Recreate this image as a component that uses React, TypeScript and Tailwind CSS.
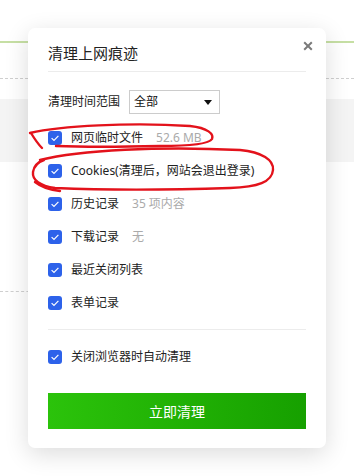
import React from 'react';

const font = { fontFamily: '"Noto Sans", "Noto Sans CJK SC", sans-serif' };

const Check: React.FC = () => (
    <span className="flex h-[14px] w-[14px] shrink-0 items-center justify-center rounded-[3px] bg-[#2d62ea]">
        <svg width="14" height="14" viewBox="0 0 14 14">
            <path d="M3.6 7.1 L6 9.4 L10.4 4.9" fill="none" stroke="#fff" strokeWidth="1.2" />
        </svg>
    </span>
);

interface RowProps {
    label: string;
    extra?: string;
}

const Row: React.FC<RowProps> = ({ label, extra }) => (
    <div className="flex h-[33px] items-center">
        <Check />
        <span className="ml-[9px] text-[12px] text-[#222]">{label}</span>
        {extra && <span className="ml-[13px] text-[12px] text-[#aaa]">{extra}</span>}
    </div>
);

const items: RowProps[] = [
    { label: '网页临时文件', extra: '52.6 MB' },
    { label: 'Cookies(清理后，网站会退出登录)' },
    { label: '历史记录', extra: '35 项内容' },
    { label: '下载记录', extra: '无' },
    { label: '最近关闭列表' },
    { label: '表单记录' },
];

export default function App() {
    return (
        <div className="relative h-[476px] w-[354px] overflow-hidden bg-white" style={font}>
            {/* page behind the dialog */}
            <div className="pt-[41px]">
                <div className="h-[2px] bg-[#c6dfa4]" />
                <div className="mt-[35px] border-t border-dashed border-[#cfcfcf]" />
                <div className="mt-[20px] h-[63px] bg-[#f4f4f4]" />
                <div className="ml-0 mt-[129px] w-[40px] border-t border-dashed border-[#cfcfcf]" />
            </div>

            {/* dialog */}
            <div className="absolute left-[28px] top-[28px] flex w-[298px] flex-col rounded-[7px] bg-white px-5 pb-[19px] shadow-[0_6px_24px_rgba(0,0,0,0.14)]">
                <div className="relative pt-[15px]">
                    <div className="text-[15px] leading-[20px] text-[#222]">清理上网痕迹</div>
                    <svg className="absolute right-[-7px] top-[13px]" width="10" height="10" viewBox="0 0 10 10">
                        <path d="M1.2 1.2 L8.8 8.8 M8.8 1.2 L1.2 8.8" stroke="#7a7a7a" strokeWidth="2" />
                    </svg>
                </div>
                <div className="mt-[8px] border-b border-[#ececec]" />

                <div className="mt-[18px] flex items-center">
                    <span className="text-[12px] text-[#222]">清理时间范围</span>
                    <div className="ml-[9px] flex h-[24px] w-[91px] items-center justify-between border border-[#cccccc] pl-[4px] pr-[7px]">
                        <span className="text-[12px] text-[#111]">全部</span>
                        <svg width="8" height="5" viewBox="0 0 8 5">
                            <path d="M0 0 H8 L4 5 Z" fill="#111" />
                        </svg>
                    </div>
                </div>

                <div className="mt-[7px] flex flex-col">
                    {items.map(it => <Row key={it.label} {...it} />)}
                </div>

                <div className="mt-[10px] border-b border-[#ececec]" />
                <div className="mt-[10px]">
                    <Row label="关闭浏览器时自动清理" />
                </div>

                <button className="mt-[20px] flex h-[36px] w-full items-center justify-center bg-gradient-to-r from-[#2bc30b] to-[#16a000] text-[14px] text-white">
                    立即清理
                </button>
            </div>

            {/* red hand-drawn marks */}
            <svg className="pointer-events-none absolute left-0 top-0" width="354" height="476" viewBox="0 0 354 476">
                <g fill="none" stroke="#e3121b" strokeWidth="2.4" strokeLinecap="round" strokeLinejoin="round">
                    <path d="M30 133 C60 126 130 122 190 126 C208 128 214 134 212 139 C209 144 190 146 160 146 C120 147 80 147 56 146" />
                    <path d="M31 133 C34 138 37 143 42 148" />
                    <path d="M40 160 C80 150 160 146 240 150 C262 152 274 160 273 170 C272 182 258 187 230 188 C170 190 100 190 55 188 C40 186 32 180 33 172 C34 166 38 162 44 160" />
                    <path d="M35 182 C40 186 50 190 60 191" />
                </g>
            </svg>
        </div>
    );
}
